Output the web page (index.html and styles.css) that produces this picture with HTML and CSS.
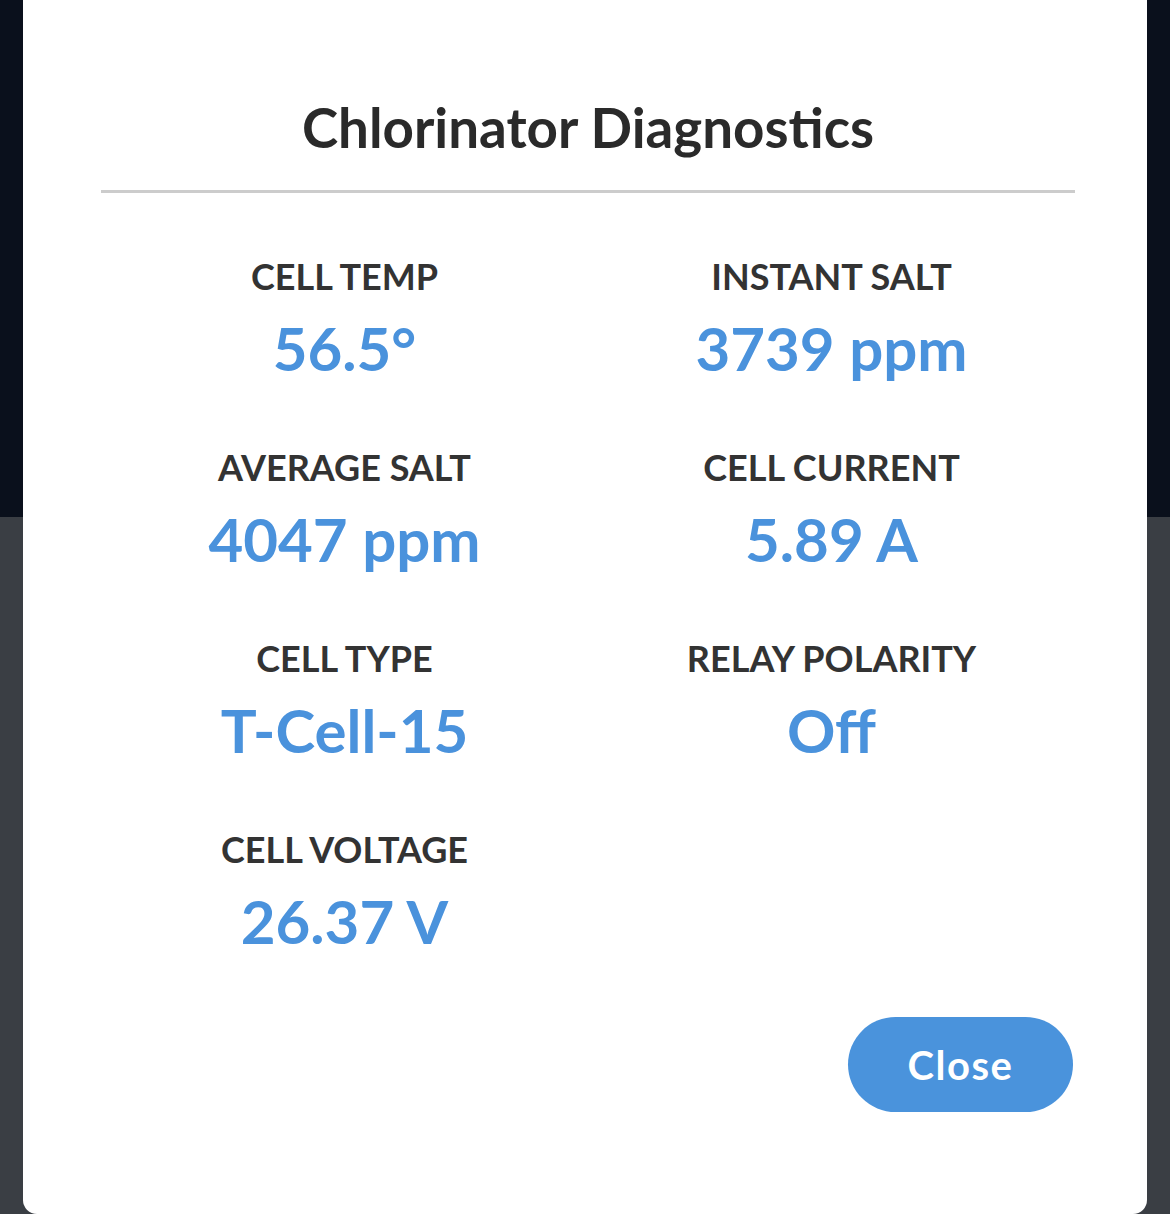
FILE: index.html
```html
<!DOCTYPE html>
<html lang="en">
<head>
<meta charset="utf-8">
<title>Chlorinator Diagnostics</title>
<link rel="stylesheet" href="styles.css">
</head>
<body>
<div class="modal">
  <h1 class="title">Chlorinator Diagnostics</h1>
  <div class="divider"></div>
  <div class="grid">
    <div class="item"><div class="label">CELL TEMP</div><div class="value">56.5°</div></div>
    <div class="item"><div class="label">INSTANT SALT</div><div class="value">3739 ppm</div></div>
    <div class="item"><div class="label">AVERAGE SALT</div><div class="value">4047 ppm</div></div>
    <div class="item"><div class="label">CELL CURRENT</div><div class="value">5.89 A</div></div>
    <div class="item"><div class="label">CELL TYPE</div><div class="value">T-Cell-15</div></div>
    <div class="item"><div class="label">RELAY POLARITY</div><div class="value">Off</div></div>
    <div class="item"><div class="label">CELL VOLTAGE</div><div class="value">26.37 V</div></div>
  </div>
  <div class="actions">
    <button class="close">Close</button>
  </div>
</div>
</body>
</html>
```

FILE: styles.css
```css
html, body {
  margin: 0;
  padding: 0;
}
body {
  width: 1170px;
  height: 1214px;
  overflow: hidden;
  background: linear-gradient(to bottom, #0a101c 0, #0a101c 517px, #3a3e44 517px, #3a3e44 100%);
  font-family: Lato, "Open Sans", sans-serif;
}
.modal {
  margin-left: 23px;
  width: 1124px;
  height: 1214px;
  box-sizing: border-box;
  background: #fff;
  border-radius: 0 0 14px 14px;
  padding: 95px 72px 0 78px;
}
.title {
  margin: 0;
  font-size: 54.7px;
  line-height: 1.2;
  font-weight: 700;
  color: #2a2a2a;
  text-align: center;
}
.divider {
  margin-top: 29px;
  height: 3px;
  width: 974px;
  background: #cccccc;
}
.grid {
  width: 974px;
  margin-top: 62px;
  display: grid;
  grid-template-columns: 1fr 1fr;
  row-gap: 62px;
}
.item {
  text-align: center;
  display: flex;
  flex-direction: column;
  gap: 14px;
}
.label {
  font-size: 36px;
  line-height: 1.2;
  font-weight: 700;
  color: #333333;
}
.value {
  font-size: 60px;
  line-height: 1.2;
  font-weight: 700;
  color: #4a92dc;
}
.actions {
  width: 972px;
  display: flex;
  justify-content: flex-end;
  margin-top: 60px;
}
.close {
  width: 225px;
  height: 95px;
  border: none;
  border-radius: 48px;
  background: #4a93dc;
  color: #ffffff;
  font-family: Lato, "Open Sans", sans-serif;
  font-size: 40px;
  font-weight: 700;
  letter-spacing: 1.5px;
  padding: 0;
  cursor: pointer;
}
```
